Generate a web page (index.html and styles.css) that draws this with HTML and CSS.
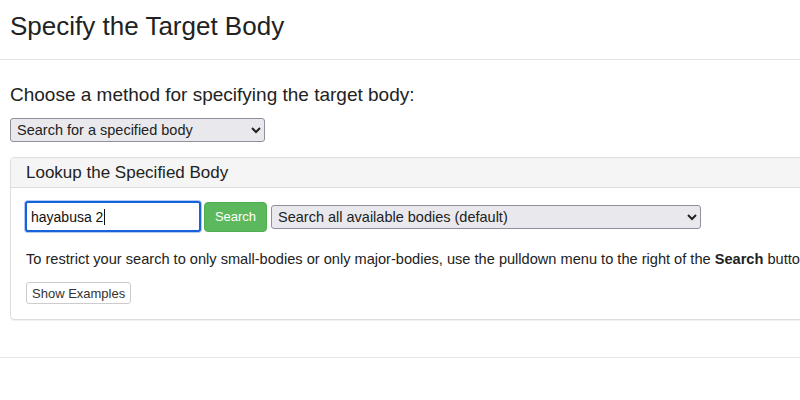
FILE: index.html
```html
<!DOCTYPE html>
<html lang="en">
<head>
<meta charset="utf-8">
<title>Specify the Target Body</title>
<link rel="stylesheet" href="styles.css">
</head>
<body>
<header class="page-header">
  <h1 class="page-title">Specify the Target Body</h1>
</header>
<main class="content">
  <h2 class="method-label">Choose a method for specifying the target body:</h2>
  <select class="method-select">
    <option>Search for a specified body</option>
  </select>
  <section class="panel">
    <div class="panel-heading">Lookup the Specified Body</div>
    <div class="panel-body">
      <div class="search-row">
        <span class="input-wrap"><input class="search-input" type="text" value="hayabusa 2"><span class="caret"></span></span>
        <button class="btn-search" type="button">Search</button>
        <select class="scope-select">
          <option>Search all available bodies (default)</option>
        </select>
      </div>
      <p class="hint">To restrict your search to only small-bodies or only major-bodies, use the pulldown menu to the right of the <b>Search</b> button.</p>
      <button class="btn-examples" type="button">Show Examples</button>
    </div>
  </section>
</main>
<hr class="footer-rule">
</body>
</html>
```
FILE: styles.css
```css
html, body {
  margin: 0;
  padding: 0;
  overflow: hidden;
  background: #fff;
}
body {
  font-family: "Liberation Sans", Arial, sans-serif;
  color: #333;
  font-size: 14px;
  width: 800px;
  height: 400px;
}
.page-header {
  height: 60px;
  border-bottom: 1px solid #e5e5e5;
  padding: 0 10px;
  box-sizing: border-box;
}
.page-title {
  margin: 0;
  padding-top: 11px;
  font-size: 26px;
  font-weight: normal;
  line-height: 30px;
  color: #222;
}
.content {
  padding: 0 10px;
  width: 1200px;
}
.method-label {
  margin: 24px 0 0 0;
  font-size: 19px;
  font-weight: normal;
  line-height: 22px;
  color: #222;
}
.method-select {
  display: block;
  margin-top: 12px;
  width: 255px;
  height: 24px;
  font-family: "Liberation Sans", Arial, sans-serif;
  font-size: 14.5px;
  color: #222;
  background-color: #e9e9ed;
  border: 1px solid #8f8f9d;
  border-radius: 3px;
  padding: 0 2px;
}
.panel {
  margin-top: 15px;
  width: 1000px;
  border: 1px solid #ddd;
  border-radius: 4px;
  box-shadow: 0 1px 1px rgba(0,0,0,.06);
}
.panel-heading {
  height: 29px;
  line-height: 29px;
  padding: 0 15px;
  font-size: 17px;
  background: #f5f5f5;
  border-bottom: 1px solid #ddd;
  border-radius: 4px 4px 0 0;
  color: #222;
}
.panel-body {
  padding: 13px 15px 15px 15px;
}
.search-row {
  display: flex;
  align-items: center;
  gap: 3px;
}
.input-wrap {
  position: relative;
  display: flex;
}
.search-input {
  box-sizing: border-box;
  width: 176px;
  height: 31px;
  margin-left: -1px;
  border: 2px solid #1762d9;
  border-radius: 3px;
  box-shadow: 0 0 0 1px #b3cbf0;
  padding: 0 4px;
  font-family: "Liberation Sans", Arial, sans-serif;
  font-size: 14px;
  color: #111;
  outline: none;
}
.caret {
  position: absolute;
  left: 78px;
  top: 8px;
  width: 1px;
  height: 16px;
  background: #111;
}
.btn-search {
  box-sizing: border-box;
  width: 63px;
  height: 30px;
  background: #5cb85c;
  border: 1px solid #4cae4c;
  border-radius: 4px;
  color: #fff;
  font-family: "Liberation Sans", Arial, sans-serif;
  font-size: 13px;
  padding: 0;
}
.scope-select {
  width: 430px;
  height: 24px;
  margin-left: 1px;
  font-family: "Liberation Sans", Arial, sans-serif;
  font-size: 14.5px;
  color: #222;
  background-color: #e9e9ed;
  border: 1px solid #8f8f9d;
  border-radius: 3px;
  padding: 0 2px;
}
.hint {
  margin: 17px 0 0 0;
  font-size: 14.6px;
  line-height: 20px;
  white-space: nowrap;
  color: #222;
}
.hint b {
  font-weight: bold;
}
.btn-examples {
  display: block;
  margin-top: 13px;
  box-sizing: border-box;
  height: 22px;
  padding: 0 5px;
  background: #fff;
  border: 1px solid #ccc;
  border-radius: 3px;
  font-family: "Liberation Sans", Arial, sans-serif;
  font-size: 13px;
  color: #333;
}
.footer-rule {
  margin: 37px 0 0 0;
  border: 0;
  border-top: 1px solid #e5e5e5;
  height: 0;
}
```
